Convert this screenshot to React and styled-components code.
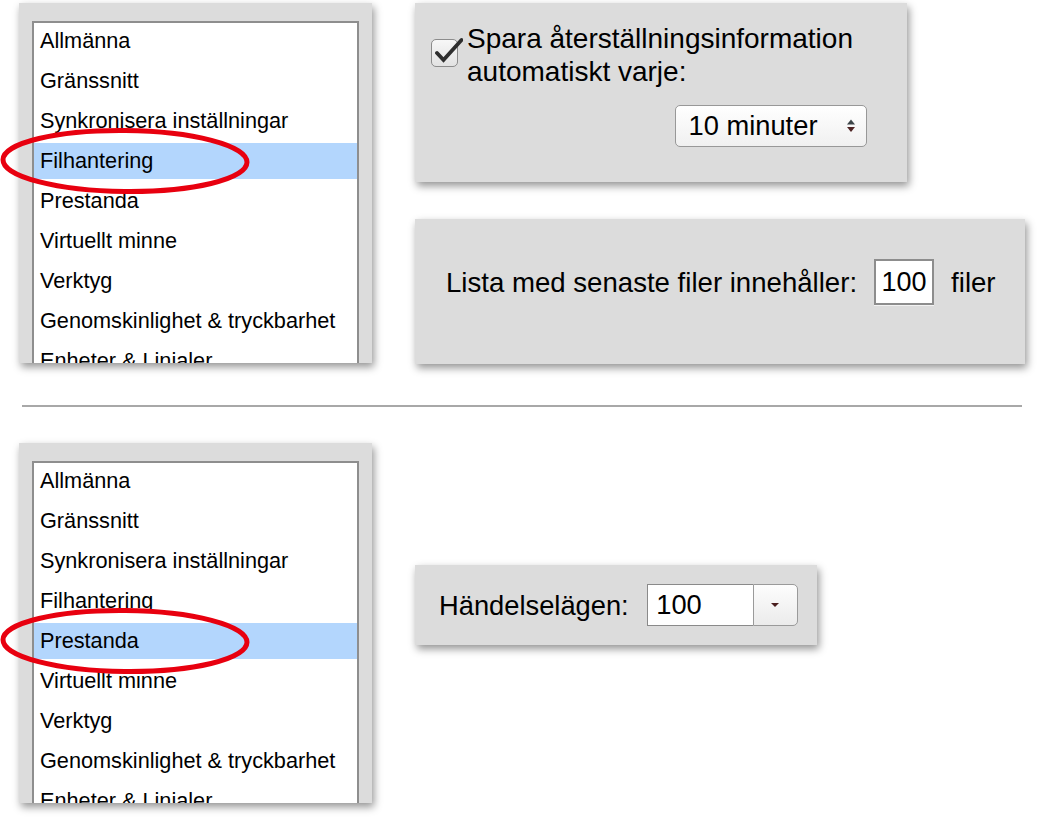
import React from 'react';
import styled, { createGlobalStyle } from 'styled-components';

const GlobalStyle = createGlobalStyle`
  html, body { margin: 0; padding: 0; background: #fff; }
  body { font-family: "Liberation Sans", Arial, Helvetica, sans-serif; color: #000; }
`;

const Page = styled.div`
  width: 1038px;
  height: 818px;
  overflow: hidden;
  box-sizing: border-box;
  padding: 3px 0 0 19px;
  display: flex;
  flex-direction: column;
`;

const Section = styled.section`
  display: flex;
  align-items: flex-start;
  gap: 43px;
`;

const Panel = styled.div`
  background: #dcdcdc;
  box-shadow: 2px 4px 8px rgba(0, 0, 0, 0.42);
  box-sizing: border-box;
`;

const ListWrap = styled.div`
  position: relative;
  flex: none;
`;

const ListPanel = styled(Panel)`
  width: 353px;
  height: 360px;
  padding: 18px 13px 0;
  overflow: hidden;
`;

const List = styled.ul`
  list-style: none;
  margin: 0;
  padding: 0;
  height: 400px;
  box-sizing: border-box;
  background: #fff;
  border: 2px solid #8e8e8e;
  display: flex;
  flex-direction: column;
  gap: 4px;
`;

const Item = styled.li`
  height: 36px;
  flex: none;
  display: flex;
  align-items: center;
  padding-left: 6px;
  font-size: 21.7px;
  white-space: nowrap;
  background: ${(p) => (p.$selected ? '#b3d6fd' : 'transparent')};
`;

const Mark = styled.svg`
  position: absolute;
  left: -19px;
  pointer-events: none;
`;

const RightCol = styled.div`
  display: flex;
  flex-direction: column;
  gap: 37px;
`;

const AutoSavePanel = styled(Panel)`
  width: 492px;
  height: 179px;
  padding: 19px 40px 0 16px;
  display: flex;
  flex-direction: column;
`;

const CheckRow = styled.label`
  display: flex;
  align-items: flex-start;
  gap: 9px;
`;

const CheckBox = styled.span`
  position: relative;
  flex: none;
  width: 27px;
  height: 28px;
  margin-top: 17px;
  box-sizing: border-box;
  border: 1.5px solid #8c8c8c;
  border-radius: 5px;
  background: linear-gradient(#f7f7f7, #e2e2e2);
`;

const CheckMark = styled.svg`
  position: absolute;
  left: 1px;
  top: -3px;
`;

const BigText = styled.span`
  font-size: ${(p) => p.$size || 27.3}px;
  line-height: 33px;
  white-space: nowrap;
`;

const SelectBox = styled.div`
  align-self: flex-end;
  margin-top: 17px;
  width: 192px;
  height: 42px;
  box-sizing: border-box;
  border: 1.5px solid #989898;
  border-radius: 5px;
  background: linear-gradient(#ffffff, #f0f0f0);
  display: flex;
  align-items: center;
  justify-content: space-between;
  padding: 0 9px 0 12.5px;
  font-size: 27.3px;
`;

const RecentPanel = styled(Panel)`
  width: 610px;
  height: 145px;
  padding: 40px 0 0 31px;
  display: flex;
  align-items: flex-start;
`;

const InlineRow = styled.div`
  display: flex;
  align-items: center;
  height: 46px;
`;

const NumberBox = styled.div`
  width: 60px;
  height: 46px;
  box-sizing: border-box;
  margin: 0 17px 0 17px;
  border: 2px solid #8d8d8d;
  background: #fff;
  display: flex;
  align-items: center;
  justify-content: center;
  font-size: 27px;
  box-shadow: 0 1px 0 #f2f2f2;
`;

const Rule = styled.hr`
  flex: none;
  margin: 41px 0 36px 3px;
  width: 1000px;
  height: 2px;
  border: 0;
  background: #a8a8a8;
`;

const UndoPanel = styled(Panel)`
  margin-top: 122px;
  width: 402px;
  height: 80px;
  padding: 0 0 0 24px;
  display: flex;
  align-items: center;
`;

const Combo = styled.div`
  display: flex;
  width: 151px;
  height: 42px;
  margin-left: 18px;
`;

const ComboField = styled.div`
  width: 106px;
  box-sizing: border-box;
  border: 1.5px solid #8a8a8a;
  border-right: none;
  background: #fff;
  padding-left: 8.5px;
  display: flex;
  align-items: center;
  font-size: 27.3px;
`;

const ComboButton = styled.div`
  flex: 1;
  box-sizing: border-box;
  border: 1.5px solid #9a9a9a;
  border-radius: 0 5px 5px 0;
  background: linear-gradient(#fdfdfd, #ebebeb);
  display: flex;
  align-items: center;
  justify-content: center;
`;

const items = [
  'Allmänna',
  'Gränssnitt',
  'Synkronisera inställningar',
  'Filhantering',
  'Prestanda',
  'Virtuellt minne',
  'Verktyg',
  'Genomskinlighet & tryckbarhet',
  'Enheter & Linjaler',
];

function PrefList({ selected }) {
  const center = 18 + 2 + 40 * selected + 18;
  return (
    <ListWrap>
      <ListPanel>
        <List>
          {items.map((t, i) => (
            <Item key={t} $selected={i === selected}>
              {t}
            </Item>
          ))}
        </List>
      </ListPanel>
      <Mark width="254" height="76" viewBox="0 0 254 76" style={{ top: center - 38 }}>
        <ellipse
          cx="125"
          cy="38"
          rx="122"
          ry="30.5"
          fill="none"
          stroke="#e8000f"
          strokeWidth="5"
          transform="rotate(0.6 125 38)"
        />
      </Mark>
    </ListWrap>
  );
}

export default function App() {
  return (
    <>
      <GlobalStyle />
      <Page>
        <Section>
          <PrefList selected={3} />
          <RightCol>
            <AutoSavePanel>
              <CheckRow>
                <CheckBox>
                  <CheckMark width="30" height="28" viewBox="0 0 30 28">
                    <polyline
                      points="4,16 10.5,23 28.5,3"
                      fill="none"
                      stroke="#2e2e2e"
                      strokeWidth="3.8"
                      strokeLinecap="round"
                      strokeLinejoin="miter"
                    />
                  </CheckMark>
                </CheckBox>
                <BigText $size={28}>
                  Spara återställningsinformation
                  <br />
                  automatiskt varje:
                </BigText>
              </CheckRow>
              <SelectBox>
                <span>10 minuter</span>
                <svg width="12" height="18" viewBox="0 0 12 18">
                  <polygon points="6,2.5 10,7.5 2,7.5" fill="#3c4548" />
                  <polygon points="2,10 10,10 6,15" fill="#4e2424" />
                </svg>
              </SelectBox>
            </AutoSavePanel>
            <RecentPanel>
              <InlineRow>
                <BigText $size={27.6}>Lista med senaste filer innehåller:</BigText>
                <NumberBox>100</NumberBox>
                <BigText $size={27.6}>filer</BigText>
              </InlineRow>
            </RecentPanel>
          </RightCol>
        </Section>
        <Rule />
        <Section>
          <PrefList selected={4} />
          <UndoPanel>
            <BigText>Händelselägen:</BigText>
            <Combo>
              <ComboField>100</ComboField>
              <ComboButton>
                <svg width="10" height="6" viewBox="0 0 10 6">
                  <polygon points="1,1 9,1 5,5" fill="#4a1e1e" />
                </svg>
              </ComboButton>
            </Combo>
          </UndoPanel>
        </Section>
      </Page>
    </>
  );
}
